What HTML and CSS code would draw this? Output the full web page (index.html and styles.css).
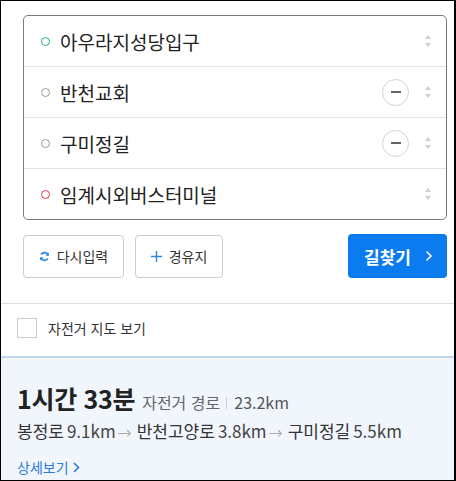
FILE: index.html
```html
<!DOCTYPE html>
<html lang="ko">
<head>
<meta charset="utf-8">
<link rel="stylesheet" href="styles.css">
</head>
<body>
<div class="frame">
  <div class="top">
    <div class="stops">
      <div class="stop">
        <span class="dot dot-start"></span>
        <span class="name">아우라지성당입구</span>
        <span class="sort"><i class="up"></i><i class="down"></i></span>
      </div>
      <div class="stop">
        <span class="dot"></span>
        <span class="name">반천교회</span>
        <span class="remove"><i></i></span>
        <span class="sort"><i class="up"></i><i class="down"></i></span>
      </div>
      <div class="stop">
        <span class="dot"></span>
        <span class="name">구미정길</span>
        <span class="remove"><i></i></span>
        <span class="sort"><i class="up"></i><i class="down"></i></span>
      </div>
      <div class="stop">
        <span class="dot dot-end"></span>
        <span class="name">임계시외버스터미널</span>
        <span class="sort"><i class="up"></i><i class="down"></i></span>
      </div>
    </div>
    <div class="actions">
      <button class="btn btn-reset">
        <svg width="11" height="11" viewBox="0 0 12 12"><path d="M10 4.5A4.3 4.3 0 0 0 2.3 4" fill="none" stroke="#2e86e8" stroke-width="2"/><path d="M10.8 1.5v3.6H7.2z" fill="#2e86e8"/><path d="M2 7.5A4.3 4.3 0 0 0 9.7 8" fill="none" stroke="#2e86e8" stroke-width="2"/><path d="M1.2 10.5V6.9h3.6z" fill="#2e86e8"/></svg>
        다시입력
      </button>
      <button class="btn btn-via">
        <svg width="11" height="11" viewBox="0 0 11 11"><path d="M5.5 0v11M0 5.5h11" stroke="#2e86e8" stroke-width="1.4"/></svg>
        경유지
      </button>
      <button class="btn-go">길찾기 <svg width="8" height="12" viewBox="0 0 8 12"><path d="M1.5 1.5 6 6l-4.5 4.5" fill="none" stroke="#fff" stroke-width="1.6"/></svg></button>
    </div>
  </div>
  <div class="option">
    <span class="check"></span>
    <span class="check-label">자전거 지도 보기</span>
  </div>
  <div class="result">
    <div class="summary">
      <span class="time">1시간 33분</span>
      <span class="kind">자전거 경로</span>
      <span class="sep"></span>
      <span class="dist">23.2km</span>
    </div>
    <div class="route">
      <span>봉정로</span><span class="km">9.1km</span><span class="arrow">→</span><span>반천고양로</span><span class="km">3.8km</span><span class="arrow">→</span><span>구미정길</span><span class="km">5.5km</span>
    </div>
    <a class="detail">상세보기 <svg width="7" height="11" viewBox="0 0 7 11"><path d="M1 1l4.5 4.5L1 10" fill="none" stroke="#2a7bd9" stroke-width="1.6"/></svg></a>
  </div>
</div>
</body>
</html>
```
FILE: styles.css
```css
* { box-sizing: border-box; }
html, body { margin: 0; padding: 0; background: #fff; }
body { font-family: "Noto Sans CJK KR", "Noto Sans", sans-serif; color: #222; }

.frame {
  width: 456px;
  height: 481px;
  border: 1px solid #000;
  border-right-width: 2px;
  display: flex;
  flex-direction: column;
  overflow: hidden;
}

.top {
  padding: 14px 7px 25px 22px;
  border-bottom: 1px solid #ddd;
}

.stops {
  border: 1px solid #7a7a7a;
  border-radius: 5px;
}
.stop {
  height: 51px;
  display: flex;
  align-items: center;
  padding: 0 14px 0 17px;
  border-top: 1px solid #e3e3e3;
}
.stop:first-child { height: 50px; border-top: none; }

.dot {
  width: 9px; height: 9px;
  border-radius: 50%;
  border: 1px solid #999;
  margin-right: 10px;
  flex: none;
}
.dot-start { border-color: #1fb371; }
.dot-end { border-color: #e8324d; }

.name {
  font-size: 19px;
  color: #222;
  flex: 1;
  line-height: 1;
}

.remove {
  width: 27px; height: 27px;
  border: 1px solid #d2d2d2;
  border-radius: 50%;
  display: flex;
  align-items: center;
  justify-content: center;
  margin-right: 15px;
}
.remove i {
  display: block;
  width: 10px; height: 1.5px;
  background: #666;
}

.sort {
  display: flex;
  flex-direction: column;
  gap: 4px;
  width: 8px;
  align-items: center;
}
.sort i { display: block; width: 0; height: 0; border-left: 3.5px solid transparent; border-right: 3.5px solid transparent; }
.sort .up { border-bottom: 4px solid #cfcfcf; }
.sort .down { border-top: 4px solid #cfcfcf; }

.actions {
  display: flex;
  align-items: center;
  margin-top: 14px;
  gap: 11px;
}
.btn {
  height: 43px;
  border: 1px solid #cdcdcd;
  border-radius: 4px;
  background: #fff;
  font-family: inherit;
  font-size: 14px;
  color: #333;
  display: flex;
  align-items: center;
  justify-content: center;
  gap: 7px;
  padding: 0;
}
.btn-reset { width: 101px; }
.btn-via { width: 88px; }
.btn-go {
  margin-left: auto;
  width: 99px;
  height: 44px;
  background: #0b7cf0;
  border: none;
  border-radius: 4px;
  color: #fff;
  font-family: inherit;
  font-size: 17px;
  font-weight: 700;
  display: flex;
  align-items: center;
  justify-content: center;
  gap: 14px;
  padding: 0 0 0 2px;
}

.option {
  display: flex;
  align-items: center;
  padding: 0 0 4px 16px;
  height: 52px;
}
.check {
  width: 20px; height: 20px;
  border: 1px solid #ccc;
  background: #fff;
  margin-right: 11px;
}
.check-label { font-size: 14px; color: #333; }

.result {
  flex: 1;
  background: #f1f6fd;
  border-top: 2px solid #c2d7ec;
  padding: 22px 16px 0 16px;
}
.summary {
  display: flex;
  align-items: baseline;
  height: 36px;
}
.time {
  font-size: 25px;
  font-weight: 700;
  color: #222;
  letter-spacing: -0.3px;
}
.kind { font-size: 16px; color: #666; margin-left: 7px; }
.sep { display: inline-block; width: 1px; height: 12px; background: #ccc; margin: 0 7px 0 6px; }
.dist { font-size: 16px; color: #555; }

.route {
  font-size: 17px;
  color: #333;
  display: flex;
  align-items: baseline;
  margin-top: 2px;
}
.route .km { margin-left: 3px; color: #444; }
.route .arrow { color: #aaa; font-size: 14px; margin: 0 5px 0 2px; }

.detail {
  display: inline-flex;
  align-items: center;
  gap: 4px;
  margin-top: 14px;
  font-size: 14px;
  color: #2a7bd9;
}
```
